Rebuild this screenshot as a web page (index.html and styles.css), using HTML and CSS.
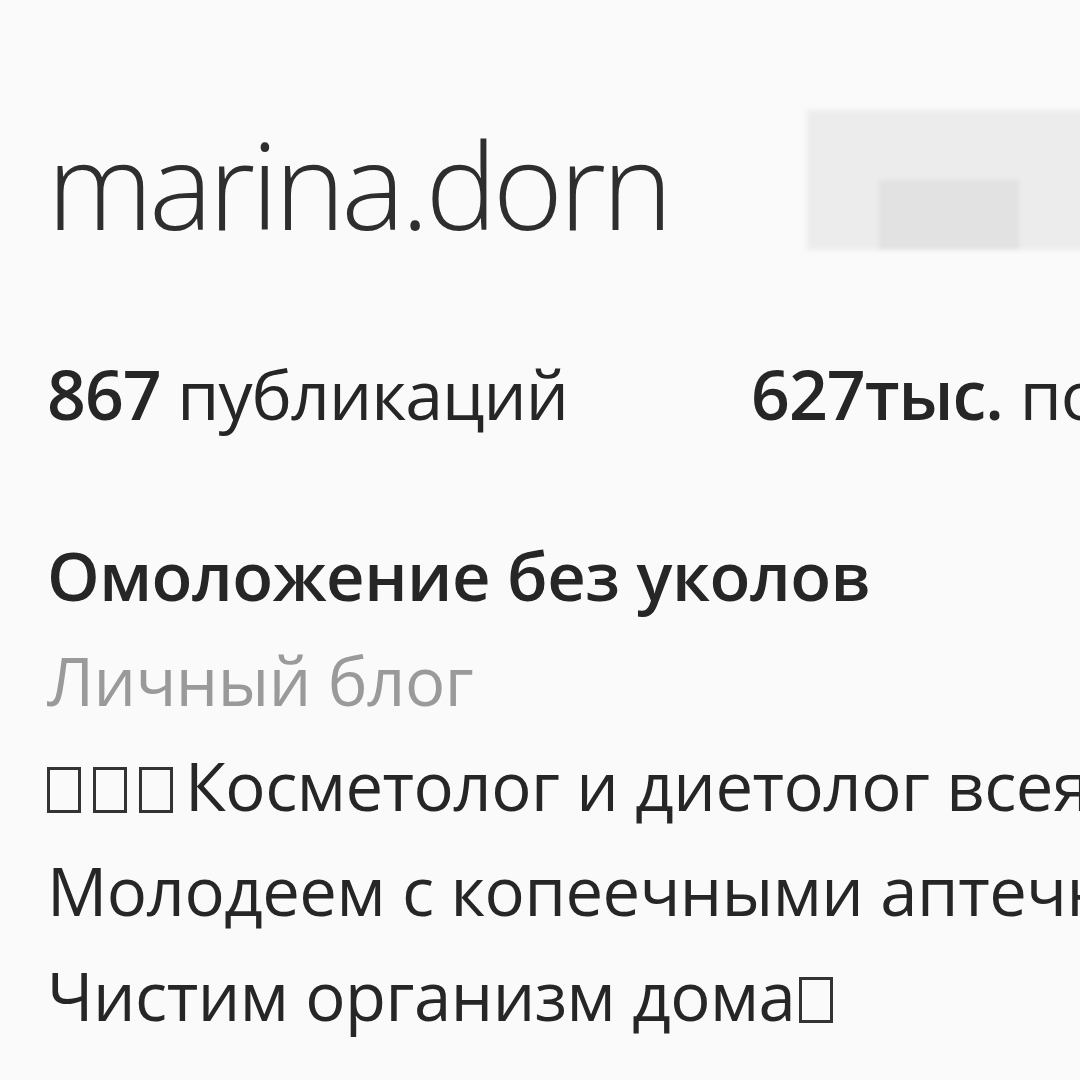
FILE: index.html
```html
<!DOCTYPE html>
<html lang="ru">
<head>
<meta charset="utf-8">
<title>marina.dorn</title>
<link rel="stylesheet" href="styles.css">
</head>
<body>
<main class="profile">
  <header class="head">
    <h1 class="username">marina.dorn</h1>
    <div class="follow-blur"><div class="follow-blur-inner"></div></div>
  </header>
  <ul class="stats">
    <li class="stat"><b>867</b> публикаций</li>
    <li class="stat"><b>627тыс.</b> подписчиков</li>
  </ul>
  <div class="bio">
    <div class="bio-line bio-name">Омоложение без уколов</div>
    <div class="bio-line bio-cat">Личный блог</div>
    <div class="bio-line"><span class="tofu"></span><span class="tofu"></span><span class="tofu"></span>Косметолог и диетолог всея Руси</div>
    <div class="bio-line">Молодеем с копеечными аптечными средствами</div>
    <div class="bio-line">Чистим организм дома<span class="tofu tofu-end"></span></div>
  </div>
</main>
</body>
</html>
```

FILE: styles.css
```css
html, body {
  margin: 0;
  padding: 0;
  background: #fafafa;
  overflow: hidden;
}
body {
  width: 1080px;
  height: 1080px;
  font-family: "Open Sans", "Noto Sans", sans-serif;
  color: #262626;
}
.profile {
  padding: 0 0 0 47px;
  overflow: hidden;
}
.head {
  display: flex;
  align-items: flex-start;
  padding-top: 124px;
  height: 150px;
  box-sizing: content-box;
}
.username {
  margin: 0;
  font-size: 120px;
  font-weight: 300;
  line-height: 1;
  letter-spacing: -4px;
  color: #2e2e2e;
  white-space: nowrap;
}
.follow-blur {
  margin-left: 138px;
  margin-top: -14px;
  width: 300px;
  height: 140px;
  background: #ececec;
  flex-shrink: 0;
  position: relative;
  filter: blur(2px);
}
.follow-blur-inner {
  position: absolute;
  left: 72px;
  top: 70px;
  width: 140px;
  height: 70px;
  background: #e2e2e2;
}
.stats {
  list-style: none;
  margin: 0;
  padding: 0;
  display: flex;
  gap: 183px;
  white-space: nowrap;
  font-size: 68px;
  line-height: 1;
  letter-spacing: -1px;
  margin-top: 86px;
}
.stat b {
  font-weight: 600;
}
.bio {
  margin-top: 95px;
  font-size: 67px;
  line-height: 105px;
  letter-spacing: -0.5px;
  white-space: nowrap;
}
.bio-name {
  font-weight: 600;
}
.bio-cat {
  color: #9a9a9a;
}
.tofu {
  display: inline-block;
  width: 28px;
  height: 40px;
  border: 3px solid #333;
  margin-right: 12px;
  vertical-align: -2px;
}
.tofu-end {
  margin-left: 4px;
  margin-right: 0;
}
```
